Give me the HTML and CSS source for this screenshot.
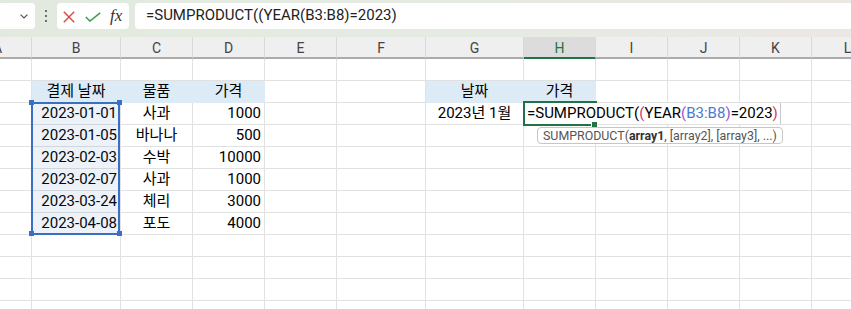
FILE: index.html
```html
<!DOCTYPE html>
<html lang="ko">
<head>
    <meta charset="UTF-8">
    <title>SUMPRODUCT</title>
    <link rel="stylesheet" href="styles.css">
</head>
<body>
    <div class="formula-bar">
        <div class="name-box">
            <svg class="chev" viewBox="0 0 8 5"><path d="M0.6 0.6L4 4L7.4 0.6"/></svg>
        </div>
        <div class="more"><span></span><span></span><span></span></div>
        <div class="fx-box">
            <svg class="cancel" viewBox="0 0 12 12"><path d="M0.8 0.8L11.2 11.2M11.2 0.8L0.8 11.2"/></svg>
            <svg class="enter" viewBox="0 0 16 10"><path d="M0.8 5L4.9 9.1L15.2 0.8"/></svg>
            <span class="fx">fx</span>
        </div>
        <div class="formula-input">=SUMPRODUCT((YEAR(B3:B8)=2023)</div>
    </div>

    <div class="sheet">
        <div class="col-heads" id="heads"></div>
        <div id="rows"></div>

        <!-- 수식에서 참조한 범위 B3:B8 -->
        <div class="range-sel">
            <span class="h tl"></span><span class="h tr"></span>
            <span class="h bl"></span><span class="h br"></span>
        </div>

        <!-- 편집 중인 H3 -->
        <div class="edit-cell">=SUMPRODUCT(<span class="p1">(</span>YEAR<span class="p2">(</span><span class="ref">B3:B8</span><span class="p2">)</span>=2023<span class="p1">)</span></div>
        <div class="active-frame"></div>
        <div class="fill-handle"></div>
        <div class="tip">SUMPRODUCT(<b>array1</b>, [array2], [array3], ...)</div>
    </div>

    <script>
        const cols = ['A', 'B', 'C', 'D', 'E', 'F', 'G', 'H', 'I', 'J', 'K', 'L'];
        const rowCount = 12;

        // 시트 데이터
        const data = {
            2: { B: '결제 날짜', C: '물품', D: '가격', G: '날짜', H: '가격' },
            3: { B: '2023-01-01', C: '사과', D: '1000', G: '2023년 1월' },
            4: { B: '2023-01-05', C: '바나나', D: '500' },
            5: { B: '2023-02-03', C: '수박', D: '10000' },
            6: { B: '2023-02-07', C: '사과', D: '1000' },
            7: { B: '2023-03-24', C: '체리', D: '3000' },
            8: { B: '2023-04-08', C: '포도', D: '4000' }
        };
        const filled = ['B2', 'C2', 'D2', 'G2', 'H2'];

        function buildHeads() {
            const heads = document.getElementById('heads');
            cols.forEach(col => {
                const el = document.createElement('div');
                el.className = 'hd' + (col === 'H' ? ' on' : '') + (col === 'A' ? ' cut' : '');
                el.textContent = col;
                heads.appendChild(el);
            });
        }

        function buildRows() {
            const rows = document.getElementById('rows');
            for (let r = 1; r <= rowCount; r++) {
                const row = document.createElement('div');
                row.className = 'row';
                cols.forEach(col => {
                    const cell = document.createElement('div');
                    const value = (data[r] && data[r][col]) || '';
                    let cls = 'c';
                    if (value) cls += /^[\d-]+$/.test(value) ? ' num' : ' txt';
                    if (filled.includes(col + r)) cls += ' fill';
                    cell.className = cls;
                    cell.textContent = value;
                    row.appendChild(cell);
                });
                rows.appendChild(row);
            }
        }

        buildHeads();
        buildRows();
    </script>
</body>
</html>
```

FILE: styles.css
```css
* {
    box-sizing: border-box;
}
body {
    margin: 0;
    width: 851px;
    height: 309px;
    overflow: hidden;
    font-family: Roboto, "Noto Sans CJK KR", sans-serif;
    background: #fff;
    color: #000;
}

/* 수식 입력줄 */
.formula-bar {
    height: 37px;
    padding-top: 3px;
    display: flex;
    align-items: flex-start;
    background: linear-gradient(90deg, #e2eadf 0%, #e5ebe2 55%, #ece7e3 100%);
}
.name-box {
    width: 41px;
    height: 26px;
    margin-left: -6px;
    background: #fff;
    border-radius: 4px;
    display: flex;
    align-items: center;
    justify-content: flex-end;
    padding-right: 7px;
}
.chev {
    width: 8px;
    height: 5px;
    fill: none;
    stroke: #555;
    stroke-width: 1.2;
}
.more {
    width: 22px;
    height: 26px;
    padding-top: 7px;
    display: flex;
    flex-direction: column;
    align-items: center;
    gap: 3px;
}
.more span {
    width: 2px;
    height: 2px;
    background: #444;
    border-radius: 1px;
}
.fx-box {
    width: 72px;
    height: 26px;
    background: #fff;
    border-radius: 4px;
    display: flex;
    align-items: center;
}
.cancel {
    width: 12px;
    height: 12px;
    margin-left: 6px;
    margin-top: 1px;
    fill: none;
    stroke: #d8473d;
    stroke-width: 1.4;
}
.enter {
    width: 16px;
    height: 10px;
    margin-left: 10px;
    margin-top: 1px;
    fill: none;
    stroke: #3f9c4e;
    stroke-width: 1.5;
}
.fx {
    margin-left: 9px;
    font-family: "Liberation Serif", serif;
    font-style: italic;
    font-size: 17px;
    color: #333;
    line-height: 26px;
}
.formula-input {
    flex: 1;
    height: 26px;
    margin-left: 6px;
    margin-right: -10px;
    padding-left: 11px;
    background: #fff;
    border-radius: 4px;
    font-size: 15px;
    line-height: 24px;
    color: #222;
    white-space: nowrap;
}

/* 시트 */
.sheet {
    position: relative;
}
.col-heads,
.row {
    display: grid;
    grid-template-columns: 32px 89px 72px 72px 72px 89px 98px 72px 72px 72px 72px 72px;
}
.hd {
    height: 22px;
    background: #efefef;
    border-right: 1px solid #d9d9d9;
    border-bottom: 2px solid #ababab;
    text-align: center;
    font-size: 14px;
    line-height: 22px;
    color: #444;
}
.hd.cut {
    text-align: left;
    text-indent: -7px;
    overflow: hidden;
}
.hd.on {
    background: #dcdcdc;
    border-bottom-color: #217346;
    color: #217346;
}
.c {
    height: 22px;
    border-right: 1px solid #e1e1e1;
    border-bottom: 1px solid #e1e1e1;
    padding: 0 3px;
    font-size: 15px;
    line-height: 21px;
    white-space: nowrap;
    overflow: hidden;
}
.c.num {
    text-align: right;
}
.c.txt {
    text-align: center;
}
.c.fill {
    background: #ddebf7;
    border-color: #ddebf7;
}

/* 참조 범위 표시 */
.range-sel {
    position: absolute;
    left: 31px;
    top: 65px;
    width: 89px;
    height: 133px;
    border: 2px solid #3b6fc6;
    background: rgba(60, 100, 180, 0.09);
}
.h {
    position: absolute;
    width: 5px;
    height: 5px;
    background: #3b6fc6;
}
.h.tl { left: -4px; top: -4px; }
.h.tr { right: -4px; top: -4px; }
.h.bl { left: -4px; bottom: -3px; }
.h.br { right: -4px; bottom: -3px; }

/* 편집 중인 셀 */
.edit-cell {
    position: absolute;
    left: 525px;
    top: 66px;
    width: 256px;
    height: 21px;
    padding-left: 2px;
    background: #fff;
    border-right: 1px solid #c8c8c8;
    font-size: 15px;
    line-height: 21px;
    white-space: nowrap;
}
.p1 { color: #d9376e; }
.p2 { color: #9a57cf; }
.ref { color: #4a7bd0; }
.active-frame {
    position: absolute;
    left: 523px;
    top: 64px;
    width: 74px;
    height: 25px;
    border: 2px solid #217346;
    border-right: none;
}
.fill-handle {
    position: absolute;
    left: 591px;
    top: 84px;
    width: 7px;
    height: 7px;
    background: #217346;
    border: 1px solid #fff;
}
.tip {
    position: absolute;
    left: 537px;
    top: 90px;
    height: 17px;
    padding: 0 5px;
    background: #fff;
    border: 1px solid #c6c6c6;
    border-radius: 4px;
    font-size: 12.4px;
    line-height: 15px;
    color: #555;
    white-space: nowrap;
}
.tip b {
    color: #333;
}
```
